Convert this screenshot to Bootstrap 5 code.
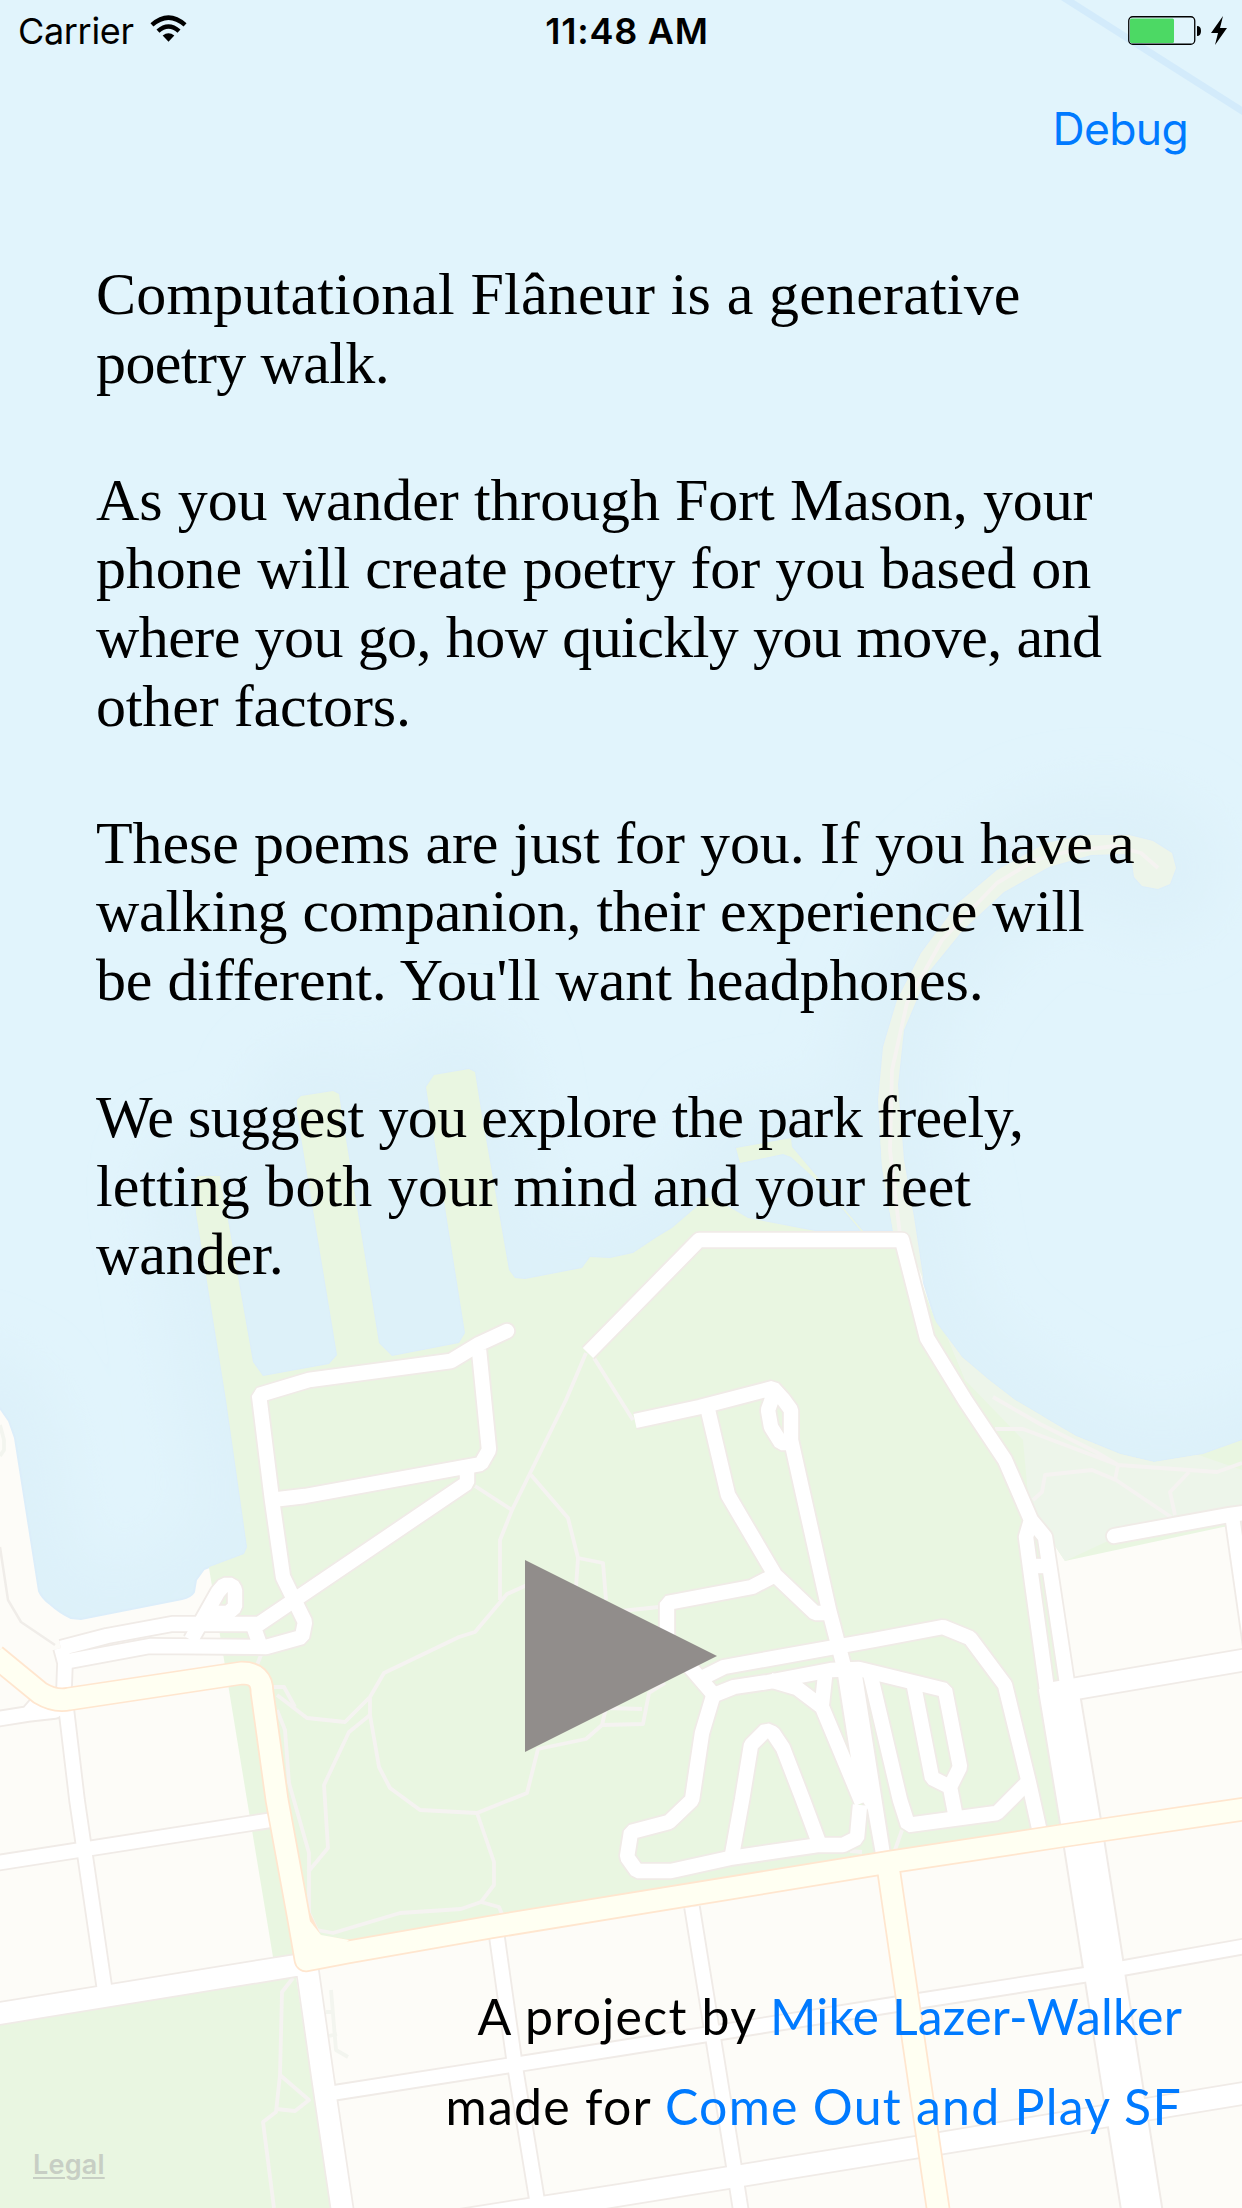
<!DOCTYPE html>
<html lang="en">
<head>
<meta charset="utf-8">
<meta name="viewport" content="width=device-width, initial-scale=1">
<title>Computational Flâneur</title>
<link href="https://cdn.jsdelivr.net/npm/bootstrap@5.3.0/dist/css/bootstrap.min.css" rel="stylesheet">
<style>
  body { background: #e1f4fc; color: #000; }
  .screen { width: 1242px; height: 2208px; }
  .map-layer { z-index: 0; }
  .content-layer { z-index: 1; }
  .ios-text { font-family: Inter, "Liberation Sans", sans-serif; }
  .ios-blue { color: #007aff; text-decoration: none; }
  .status-bar { height: 62px; padding: 0 14px 0 18px; font-size: 36px; line-height: 44px; }
  .status-side { flex: 1 1 0; }
  .carrier { letter-spacing: -.34px; }
  .clock { font-weight: 600; letter-spacing: .75px; margin-left: 8px; }
  .debug-row { height: 198px; padding: 41px 54px 0 0; }
  .debug-link { font-size: 44.5px; line-height: 53px; letter-spacing: -.7px; padding: 0; border: 0; }
  .intro { font: 60px/68.6px "Liberation Serif", serif; padding-left: 96px; height: 1300px; word-spacing: .4px; }
  .intro p { margin: 0 0 68.6px; }
  .intro span { display: block; white-space: nowrap; }
  .ls-a { letter-spacing: .18px; } .ls-b { letter-spacing: -.6px; }
  .ls-c { letter-spacing: -.11px; } .ls-d { letter-spacing: -.14px; }
  .ls-e { letter-spacing: -.57px; } .ls-f { letter-spacing: -.15px; }
  .ls-g { letter-spacing: -.28px; } .ls-h { letter-spacing: -.62px; }
  .ls-i { letter-spacing: .08px; } .ls-j { letter-spacing: -.1px; }
  .play { width: 192px; height: 192px; margin-left: 525px; padding: 0; border: 0; background: none; }
  .credits { font: 50px/90px Lato, "Liberation Sans", sans-serif; padding: 219px 60px 0 0; text-align: right; }
  .sp-wide { letter-spacing: 1.25px; } .sp-thin { letter-spacing: .15px; }
  .legal { font-size: 27px; font-weight: 600; line-height: 32px; letter-spacing: .2px; color: #c7cec4; margin: -2px 0 0 33px; text-decoration-thickness: 2px; text-underline-offset: 3px; }
</style>
<script src="https://cdn.jsdelivr.net/npm/bootstrap@5.3.0/dist/js/bootstrap.bundle.min.js"></script>
</head>
<body>
<div class="screen position-relative overflow-hidden">

<svg class="map-layer position-absolute top-0 start-0" width="1242" height="2208" viewBox="0 0 1242 2208" aria-hidden="true">
  <defs>
    <filter id="soft" x="-20%" y="-20%" width="140%" height="140%"><feGaussianBlur stdDeviation="26"/></filter>
    <path id="land" d="M-40 1390L0 1408L9 1421L15 1438L39 1591Q42 1598 50 1604Q60 1613 71 1618L81 1619L182 1599Q191 1597 194 1592L196 1580L204 1569L244 1554L247 1547L226 1400L196 1213L194 1180L198 1176H220L228 1220L253 1362L263 1376L329 1364L337 1355L297 1113V1100L301 1096L333 1091L339 1094L345 1133L379 1343L392 1356L459 1343L465 1333L430 1113L426 1087L434 1075L469 1069L475 1072L481 1110L509 1270L515 1278L525 1279L582 1268L590 1257L610 1258L633 1253L657 1237L672 1228L708 1197L726 1205L748 1218L815 1231H861L825 1188L791 1157L783 1154L740 1163L736 1148L791 1138L792 1147L863 1231H893L882 1167L878 1100L883 1047L897 1000L921 953L958 903L997 870L1046 843L1084 835H1129L1153 841L1172 853L1176 868L1170 884L1158 889L1142 886L1134 877L1132 863L1125 854L1091 855L1049 867L1004 892L963 930L928 973L904 1030L898 1085L904 1160L914 1217L924 1283L936 1322L962 1357L989 1380L1015 1400L1076 1436L1120 1454L1154 1462L1203 1454L1242 1440L1280 1430V2250H-40Z"/>
    <clipPath id="landclip"><use href="#land"/></clipPath>

    <g id="park13" fill="none" stroke-linejoin="bevel">
      <path d="M507 1331L479 1344L451 1361L309 1380L259 1395L272 1500L283 1577L305 1622L302 1637L266 1647L150 1646L69 1661" stroke-linecap="round"/>
      <path d="M61 1648L107 1636L172 1624H259L467 1483V1466M479 1350L489 1450L481 1464L305 1496L271 1500"/>
      <path d="M191 1640L218 1592L224 1585H232L235 1590V1607L228 1613H204M254 1628L260 1645"/>
      <path d="M588 1353L699 1240H902L927 1338L965 1400L1005 1460L1031 1520L1026 1537L1032 1582L1047 1690M1031 1520L1045 1537L1068 1690" stroke-linejoin="round"/>
      <path d="M1034 1566H1047"/>
      <path d="M635 1421L700 1407L773 1388L783 1399L791 1410V1443H781L771 1427L768 1410L773 1396M791 1440L829 1610L843 1663L848 1680"/>
      <path d="M707 1406L728 1495L775 1575L815 1613H829M775 1575L752 1587L667 1603V1640L690 1667L714 1695"/>
      <path d="M698 1680L724 1667L874 1640L943 1627L970 1638L1005 1685L1029 1783L1039 1828"/>
      <path d="M714 1695L734 1687L768 1682L831 1670L859 1669L945 1690L960 1767L950 1787L932 1778L914 1686M950 1787L955 1813"/>
      <path d="M714 1693L702 1733L692 1800L669 1822L631 1832L627 1857L637 1871H671L730 1858L819 1845H843L857 1838L860 1805"/>
      <path d="M732 1855L742 1800L751 1745L766 1730L773 1733L783 1748L803 1800L819 1843M770 1680L797 1688L822 1707L862 1803M825 1676L822 1704"/>
      <path d="M870 1673L900 1800L908 1825L997 1813L1027 1783"/>
    </g>
    <g id="street14" fill="none" stroke-linejoin="round">
      <path d="M61 1648L65 1663L64 1690L77 1800L105 1992M-10 1720L28 1714L55 1711L64 1700M26 1716L40 1700"/>
      <path d="M-10 1864L272 1820M333 2093L621 2048L898 2004L1084 1975L1252 1945"/>
      <path d="M496 1930L515 2066L537 2200M692 1907L734 2167L742 2218"/>
      <path d="M1232 1515L1252 1655"/>
    </g>
    <path id="pier14" fill="none" stroke-linecap="round" d="M1114 1536L1229 1515L1260 1511"/>
    <g id="avenue20" fill="none">
      <path d="M-10 2015L305 1964M306 1960L323 2080L343 2215M430 2225L621 2195L930 2145L1252 2092M1050 1693L1250 1659"/>
    </g>
    <path id="wide38" fill="none" d="M1058 1686L1084 1843L1143 2218"/>
    <path id="ramp" d="M838 1675H862L891 1860H877L868 1810L856 1790Z"/>
    <g id="yellow20" fill="none" stroke-linejoin="round">
      <path d="M-5 1656L40 1693Q55 1702 69 1699L242 1673Q262 1673 262 1692L277 1800L299 1920L306 1960L348 1952L491 1927L890 1862L1061 1836L1252 1808M888 1866L939 2215"/>
    </g>
  </defs>

  <rect width="1242" height="2208" fill="#e1f4fc"/>
  <use href="#land" fill="none" stroke="#dcf0f9" stroke-opacity=".8" stroke-width="95" stroke-linejoin="round" filter="url(#soft)"/>
  <path d="M1058 -6L1250 116" stroke="#d3ebfb" stroke-width="7"/>
  <use href="#land" fill="#fdfcf8" stroke="#dceefa" stroke-width="2"/>

  <g clip-path="url(#landclip)">
    <!-- parks -->
    <path d="M180 1000H860L895 1236H905L935 1320L1000 1380L1060 1430L1250 1430V1524L1223 1527L1065 1561L1053 1543L1075 1700L1085 1835L306 1965L273 1957L247 1800L209 1568Z" fill="#e9f6e1"/>
    <path d="M870 800H1200V900L915 1180L926 1290L962 1357L1010 1390L1242 1470V1508L1110 1540L1065 1561L1053 1543L1028 1495L1023 1440L965 1380L905 1236H893L870 1150Z" fill="#edf5ea"/>
    <path d="M-10 2020L295 1970L333 2218H-10Z" fill="#e9f6e1"/>
    <!-- footpaths -->
    <g fill="none" stroke="#f5f3f1" stroke-width="3.8" stroke-linejoin="round">
      <path d="M586 1353L566 1400L512 1510L500 1540V1600M475 1486L512 1510M531 1475L568 1518L578 1558L603 1563L606 1600M578 1558L576 1587M594 1358L633 1420"/>
      <path d="M527 1585L507 1594L475 1632L459 1637L384 1673L370 1697L345 1722L307 1718L277 1695M273 1687H284L295 1707M370 1697V1715L379 1767L390 1788L420 1810L477 1813L527 1793L538 1749L586 1739L602 1725L643 1724L649 1693L665 1683M602 1725L606 1708L642 1709"/>
      <path d="M370 1715L349 1732L324 1785L328 1848L308 1872M277 1710L285 1730L289 1783L309 1853V1913L317 1930L333 1933L400 1913L461 1909L481 1902L494 1885V1862L477 1813M481 1902L499 1907L502 1914"/>
      <path d="M293 1978L282 1992L280 2075L276 2112L263 2122L274 2208M280 2075L309 2100L295 2111L276 2109M621 1611L659 1607M255 1670L261 1655M902 1830L895 1850M850 1851L862 1852"/>
      <path d="M995 1429H1023L1118 1465L1217 1472L1242 1463M993 1397L1040 1424L1096 1452L1118 1465L1115 1480M1033 1500L1042 1492L1045 1475L1092 1470L1116 1480L1171 1517M1189 1472L1170 1492L1175 1515"/>
      <path d="M1158 868L1141 853L1115 846L1066 852L1035 860L997 883L942 940L907 1003L892 1070L890 1150L900 1235"/>
      <path d="M0 1547L8 1600L21 1622L55 1645" stroke="#f0ede9" stroke-width="2.5"/>
      <path d="M0 1425L4 1440V1450L0 1456M331 1990L336 2050L348 2057M326 2012H332M329 2036L337 2034" stroke="#f3f5ef"/>
    </g>
    <!-- road casings -->
    <g stroke="#f0ebe7">
      <use href="#park13" stroke-width="18"/>
      <use href="#ramp" fill="#f0ebe7" stroke-width="4"/>
      <use href="#street14" stroke-width="17.5"/>
      <use href="#pier14" stroke-width="18"/>
      <use href="#avenue20" stroke-width="24.500"/>
      <use href="#wide38" stroke-width="43"/>
    </g>
    <!-- road surfaces -->
    <g stroke="#fff">
      <use href="#park13" stroke-width="14.4"/>
      <use href="#ramp" fill="#fff" stroke-width="0"/>
      <use href="#street14" stroke-width="13.8"/>
      <use href="#pier14" stroke-width="14.4"/>
      <use href="#avenue20" stroke-width="21"/>
      <use href="#wide38" stroke-width="39"/>
    </g>
    <path d="M308 1912L320 1937L349 1941L330 1958H305Z" fill="#fffff2" stroke="#ffe6cf" stroke-width="3"/>
    <use href="#yellow20" stroke="#ffe6cf" stroke-width="24.500"/>
    <use href="#yellow20" stroke="#fffff2" stroke-width="21"/>
    <path d="M305 1915L309 1920L321 1935L349 1940L330 1958H305Z" fill="#fffff2"/>
  </g>
</svg>

<div class="content-layer position-relative d-flex flex-column h-100">
  <header class="status-bar ios-text d-flex align-items-center">
    <div class="status-side d-flex align-items-center">
      <span class="carrier">Carrier</span>
      <svg class="ms-3 mb-1" width="37" height="28" viewBox="0 0 38 28" aria-label="Wi-Fi">
        <g fill="none" stroke="#000" stroke-width="4.6"><path d="M2 9.8Q19 -5.2 36 9.8"/><path d="M8.2 16.2Q19 6.6 29.8 16.2"/></g>
        <path d="M13 20.8Q19 16 25 20.8L19 27Z"/>
      </svg>
    </div>
    <div class="clock">11:48 AM</div>
    <div class="status-side d-flex justify-content-end align-items-center">
      <svg width="100" height="30" viewBox="0 0 100 30" aria-label="Battery charging">
        <rect x=".75" y=".75" width="66" height="27.5" rx="4" fill="none" stroke="#000" stroke-width="1.3"/>
        <rect x="2" y="2.5" width="44" height="24.500" rx="1.5" fill="#4cd964"/>
        <path d="M69 10Q73 10 73 15T69 20Z"/>
        <path d="M95 0L83 17H90L87 29L99 12H92Z"/>
      </svg>
    </div>
  </header>

  <div class="debug-row d-flex justify-content-end align-items-start">
    <a href="#" class="debug-link btn btn-link ios-text ios-blue">Debug</a>
  </div>

  <main class="intro">
    <p><span class="ls-a">Computational Flâneur is a generative</span><span class="ls-b">poetry walk.</span></p>
    <p><span class="ls-c">As you wander through Fort Mason, your</span><span class="ls-d">phone will create poetry for you based on</span><span class="ls-e">where you go, how quickly you move, and</span><span class="ls-f">other factors.</span></p>
    <p><span class="ls-c">These poems are just for you. If you have a</span><span class="ls-g">walking companion, their experience will</span><span class="ls-d">be different. You'll want headphones.</span></p>
    <p><span class="ls-h">We suggest you explore the park freely,</span><span class="ls-i">letting both your mind and your feet</span><span class="ls-j">wander.</span></p>
  </main>

  <button class="play d-block" type="button" aria-label="Play">
    <svg class="d-block" width="192" height="192" viewBox="0 0 192 192"><path d="M0 0L192 96L0 192Z" fill="#918d8b"/></svg>
  </button>

  <footer>
    <div class="credits">
      <div><span class="sp-wide">A project by </span><a href="#" class="ios-blue sp-thin">Mike Lazer-Walker</a></div>
      <div><span class="sp-wide">made for </span><a href="#" class="ios-blue sp-wide">Come Out and Play SF</a></div>
    </div>
    <a href="#" class="legal ios-text d-inline-block">Legal</a>
  </footer>
</div>
</div>
</body>
</html>
